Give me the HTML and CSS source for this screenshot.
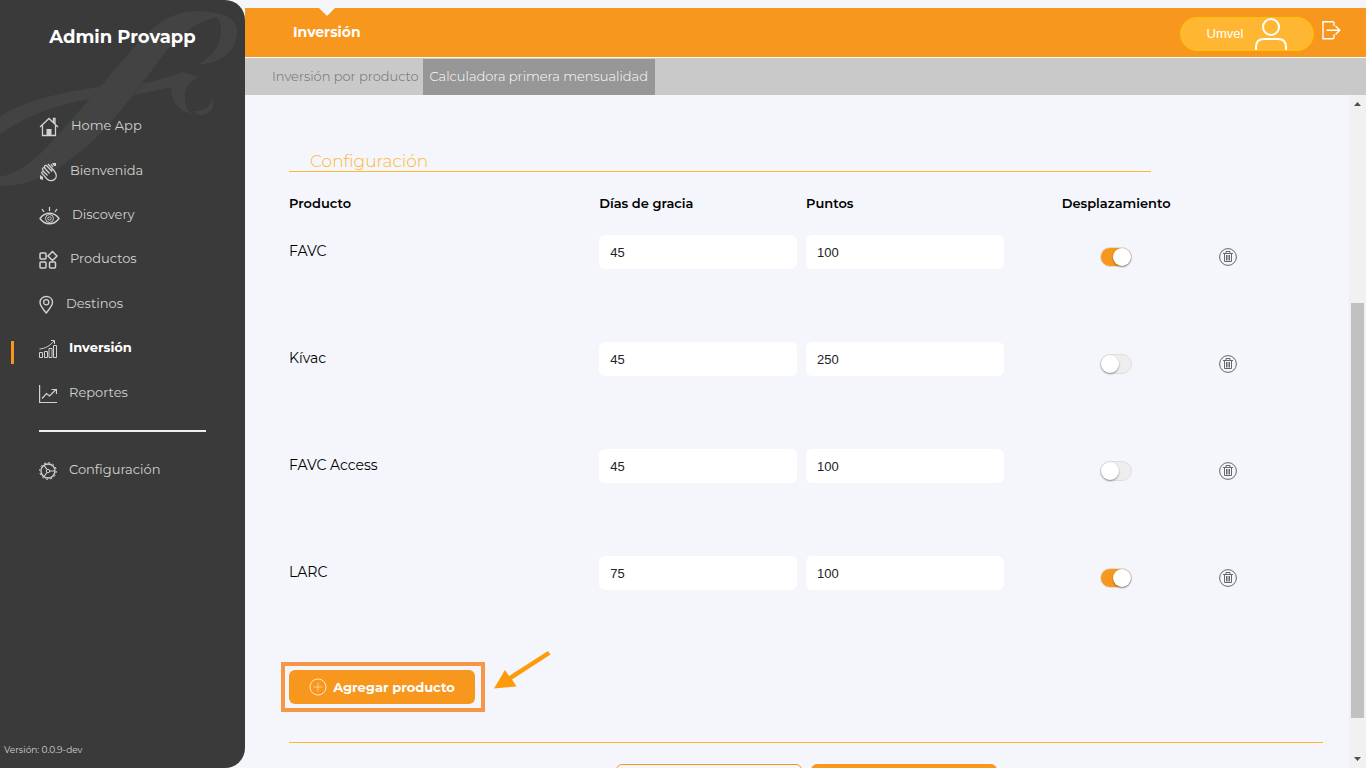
FILE: index.html
```html
<!DOCTYPE html>
<html lang="es">
<head>
<meta charset="utf-8">
<title>Admin Provapp</title>
<link rel="stylesheet" href="styles.css">
</head>
<body>
<div class="app">
  <aside class="sidebar">
    <svg class="swash" viewBox="0 0 750 600" aria-hidden="true">
      <path d="M0 530C60 520 110 475 160 420L300 262C360 190 420 115 475 72C520 38 570 30 612 34C665 40 711 50 711 95C712 150 660 194 595 192C640 170 665 130 663 88C662 68 658 60 652 52C590 62 530 110 480 178L400 285C330 370 290 420 240 455C160 520 90 560 0 557Z"/>
      <path d="M0 348C80 300 190 275 303 260L268 297C170 315 80 345 0 403Z"/>
      <path d="M428 250C470 243 510 228 548 216L598 232C560 245 553 270 555 300C557 325 570 340 582 344C545 337 510 310 514 262C475 270 440 278 402 285Z"/>
      <path d="M578 334C610 335 630 320 640 295C646 330 622 347 602 346C592 345 585 340 578 334Z"/>
    </svg>
    <h1 class="brand">Admin Provapp</h1>
    <nav class="menu">
      <a class="menu-item" href="#"><svg class="icon" width="20" height="20" viewBox="0 0 20 20"><path stroke-width="1.300" d="M1 10L10 1.500L19 10M14.500 5V1.500H16V7M3.500 8.500V18.500H16.500V8.500"/><path class="fill" d="M7.500 12H12.500V18.500H7.500Z"/></svg>Home App</a>
      <a class="menu-item" href="#"><svg class="icon" width="19" height="20" viewBox="0 0 19 20"><path stroke-width="1.200" d="M8 17L3 11.500C2 10 4 9 5 10L3.500 7.500C3 6 5 5 6 6.500L5.500 4.500C5.500 3 7.500 3 8 4L12.500 9C13 7 14 7 14.500 8C17 11 18 13 17 15.500C15 20 10 19 8 17M5 10L8.500 13.500M6 6.500L10.500 11.500M8 4L13 9.500M9 2L13.500 7M12 2L14 5"/><path class="fill" d="M1 13L4 15L4 18L1 17ZM13 1H17V4L15 4Z"/></svg>Bienvenida</a>
      <a class="menu-item" href="#"><svg class="icon" width="21" height="20" viewBox="0 0 21 20"><path stroke-width="1.300" d="M1 12.500C6 5.500 15 5.500 20 12.500C15 19.500 6 19.500 1 12.500ZM10.500 1V5M3 3L5 6M18 3L16 6"/><circle cx="10.500" cy="12.500" r="4"/><circle cx="10.500" cy="12.500" r="1.700"/></svg>Discovery</a>
      <a class="menu-item" href="#"><svg class="icon" width="19" height="20" viewBox="0 0 19 20"><g stroke-width="1.500"><rect x="1" y="3" width="6" height="6" rx="1"/><rect x="1" y="12" width="6" height="6" rx="1"/><rect x="10.500" y="12" width="6" height="6" rx="1"/><path d="M13.500 1.500L18 6L13.500 10.500L9 6Z"/></g></svg>Productos</a>
      <a class="menu-item" href="#"><svg class="icon" width="15" height="20" viewBox="0 0 15 20"><path stroke-width="1.400" d="M7.200 18C3 13 1 10.500 1 7.500C1 -0.500 13.500 -0.500 13.500 7.500C13.500 10.500 11 13 7.200 18Z"/><circle cx="7.200" cy="7.300" r="2.600" stroke-width="1.300"/></svg>Destinos</a>
      <a class="menu-item active" href="#" aria-current="page"><svg class="icon" width="18" height="20" viewBox="0 0 18 20"><path d="M.5 13.500H3.500V18.500H.5ZM5.500 12.500H8.500V18.500H5.500ZM10 9.500H13V18.500H10ZM14.500 6.500H17.500V18.500H14.500ZM.5 10C6 9.500 11 7 15 2M12 1.500H15.500V5"/></svg>Inversión</a>
      <a class="menu-item" href="#"><svg class="icon" width="18" height="20" viewBox="0 0 18 20"><path stroke-width="1.200" d="M.6 1V18.500H18M3 14.500L7.500 9.500L10.500 12L17 5.500M12.500 5.500H17.500V10"/></svg>Reportes</a>
    </nav>
    <hr class="menu-rule">
    <nav class="menu-extra">
      <a class="menu-item" href="#"><svg class="icon" width="18" height="20" viewBox="0 0 18 20"><circle cx="9" cy="10" r="7" stroke-width="1.300"/><circle cx="9" cy="10" r="8.300" stroke-dasharray="2 2.345"/><circle cx="9" cy="10" r="1.700"/><path stroke-width="1.200" d="M10.700 10H16M8 8.500L5 4.500M8 11.500L5 15.500"/></svg>Configuración</a>
    </nav>
    <p class="version">Versión: 0.0.9-dev</p>
  </aside>

  <div class="main">
    <header class="topbar">
      <a class="section" href="#">Inversión</a>
      <button class="user" type="button">Umvel
        <svg width="32" height="32" viewBox="0 0 32 32" fill="none" stroke="#fff" stroke-width="2" aria-hidden="true"><circle cx="16" cy="9" r="8"/><path d="M1 32V29C1 23.500 4 21 9 21H23C28 21 31 23.500 31 29V32"/></svg>
      </button>
      <button class="logout" type="button" aria-label="Salir">
        <svg width="19" height="19" viewBox="0 0 19 19" fill="none" stroke="#fff" stroke-width="1.400"><path d="M12 5V1.500L11 .8H1V17.800H11L12 17V13.500M4.500 9.300H17.500M13.500 5L17.800 9.300L13.500 13.500"/></svg>
      </button>
    </header>
    <nav class="tabs">
      <a class="tab" href="#">Inversión por producto</a>
      <a class="tab selected" href="#">Calculadora primera mensualidad</a>
    </nav>

    <div class="viewport">
      <main class="content">
        <h2 class="heading">Configuración</h2>
        <table class="products">
          <thead>
            <tr><th class="name" scope="col">Producto</th><th scope="col">Días de gracia</th><th scope="col">Puntos</th><th class="center" scope="col">Desplazamiento</th><td class="actions"></td></tr>
          </thead>
          <tbody>
            <tr>
              <td>FAVC</td>
              <td><input class="field" type="text" value="45" aria-label="Días de gracia de FAVC"></td>
              <td><input class="field" type="text" value="100" aria-label="Puntos de FAVC"></td>
              <td class="center"><input class="switch" type="checkbox" checked aria-label="Desplazamiento de FAVC"></td>
              <td><button class="delete" type="button" aria-label="Eliminar FAVC"><svg width="18" height="18" viewBox="0 0 18 18"><use href="#trash"/></svg></button></td>
            </tr>
            <tr>
              <td>Kívac</td>
              <td><input class="field" type="text" value="45" aria-label="Días de gracia de Kívac"></td>
              <td><input class="field" type="text" value="250" aria-label="Puntos de Kívac"></td>
              <td class="center"><input class="switch" type="checkbox" aria-label="Desplazamiento de Kívac"></td>
              <td><button class="delete" type="button" aria-label="Eliminar Kívac"><svg width="18" height="18" viewBox="0 0 18 18"><use href="#trash"/></svg></button></td>
            </tr>
            <tr>
              <td>FAVC Access</td>
              <td><input class="field" type="text" value="45" aria-label="Días de gracia de FAVC Access"></td>
              <td><input class="field" type="text" value="100" aria-label="Puntos de FAVC Access"></td>
              <td class="center"><input class="switch" type="checkbox" aria-label="Desplazamiento de FAVC Access"></td>
              <td><button class="delete" type="button" aria-label="Eliminar FAVC Access"><svg width="18" height="18" viewBox="0 0 18 18"><use href="#trash"/></svg></button></td>
            </tr>
            <tr>
              <td>LARC</td>
              <td><input class="field" type="text" value="75" aria-label="Días de gracia de LARC"></td>
              <td><input class="field" type="text" value="100" aria-label="Puntos de LARC"></td>
              <td class="center"><input class="switch" type="checkbox" checked aria-label="Desplazamiento de LARC"></td>
              <td><button class="delete" type="button" aria-label="Eliminar LARC"><svg width="18" height="18" viewBox="0 0 18 18"><use href="#trash"/></svg></button></td>
            </tr>
          </tbody>
        </table>

        <div class="add-wrap">
          <button class="add" type="button">
            <svg width="18" height="18" viewBox="0 0 18 18" fill="none" stroke="#fff" aria-hidden="true"><circle cx="9" cy="9" r="8" opacity=".75"/><path opacity=".5" d="M9 4.500V13.500M4.500 9H13.500"/></svg>
            Agregar producto
          </button>
          <span class="marker"></span>
          <svg class="arrow" width="58" height="40" viewBox="0 0 58 40" aria-hidden="true"><path d="M55 0L57.500 3.500L19 28.500L23.500 35.500L1 37.500L12 19L16 25Z" fill="#ff9a0a"/></svg>
        </div>
        <hr class="rule">
        <div class="form-actions">
          <button class="secondary" type="button" aria-label="Cancelar"></button>
          <button class="primary" type="button" aria-label="Guardar"></button>
        </div>
      </main>
      <div class="scrollbar" aria-hidden="true">
        <svg width="17" height="17" viewBox="0 0 17 17" fill="#505050"><path d="M5 11L8.500 7L12 11Z"/></svg>
        <div class="track"><div class="thumb"></div></div>
        <svg width="17" height="17" viewBox="0 0 17 17" fill="#505050"><path d="M5 6L8.500 10L12 6Z"/></svg>
      </div>
    </div>
  </div>
</div>
<svg class="defs" aria-hidden="true">
  <symbol id="trash" viewBox="0 0 18 18">
    <circle cx="9" cy="9" r="8.400" fill="none" stroke="#66666c"/>
    <path d="M4 5.500H14M7 5V3.500H11V5M5.500 5.500V13.500H12.500V5.500M7.500 7V12.500M9 7V12.500M10.500 7V12.500" fill="none" stroke="#66666c"/>
  </symbol>
</svg>
</body>
</html>
```
FILE: styles.css
```css
* { box-sizing: border-box; }

body {
  margin: 0;
  background: #f4f6fb;
  color: #000;
  font-family: Montserrat, Inter, "Open Sans", sans-serif;
  font-size: 13px;
}

a { color: inherit; text-decoration: none; }
button { padding: 0; border: 0; background: none; font: inherit; color: inherit; }
svg { display: block; flex: none; }

.app {
  display: grid;
  grid-template-columns: 245px minmax(0, 1fr);
  height: 100vh;
  overflow: hidden;
}

/* Sidebar */
.sidebar {
  position: relative;
  display: flex;
  flex-direction: column;
  background: #3a3a3a;
  color: #d2d2d2;
  border-radius: 0 20px 20px 0;
  overflow: hidden;
}
.swash {
  position: absolute;
  top: 0;
  left: 0;
  width: 250px;
  height: 200px;
  fill: #434343;
}
.brand {
  position: relative;
  margin: 25px 0 53px;
  color: #fff;
  font-size: 18px;
  line-height: 25px;
  font-weight: 700;
  text-align: center;
}
.menu {
  position: relative;
  display: grid;
  grid-auto-rows: 1fr;
  height: 311px;
}
.menu-item {
  display: flex;
  align-items: center;
  gap: 12px;
  padding-left: 39px;
}
.icon {
  margin-top: 4px;
  fill: none;
  stroke: #d2d2d2;
}
.icon .fill { fill: #d2d2d2; stroke: none; }
.active {
  position: relative;
  color: #fff;
  font-weight: 700;
}
.active::before {
  content: "";
  position: absolute;
  left: 11px;
  bottom: 6px;
  width: 3px;
  height: 23px;
  background: #f8971d;
}
.menu-rule {
  width: 167px;
  height: 2px;
  margin: 16px 39px 26px;
  border: 0;
  background: #eee;
}
.menu-extra .menu-item { height: 22px; }
.version {
  margin: auto 0 11px;
  padding-left: 4px;
  font-size: 9px;
  line-height: 14px;
}

/* Header */
.main {
  display: flex;
  flex-direction: column;
  min-width: 0;
  min-height: 0;
  padding-top: 8px;
}
.topbar {
  display: flex;
  align-items: center;
  height: 50px;
  padding: 0 25px 0 48px;
  background: #f8971d;
  border-bottom: 1px solid #fff;
  color: #fff;
}
.section {
  position: relative;
  margin-right: auto;
  font-size: 14px;
  line-height: 49px;
  font-weight: 700;
}
.section::before {
  content: "";
  position: absolute;
  top: 0;
  left: 50%;
  margin-left: -8px;
  border: 8px solid transparent;
  border-top-color: #f4f6fb;
  border-bottom: 0;
}
.user {
  display: flex;
  align-items: center;
  justify-content: center;
  gap: 12px;
  width: 134px;
  height: 34px;
  margin: 2px 8px 0 0;
  border: 1px solid #ffc107;
  border-radius: 17px;
  background: #ffb733;
  font-family: "Liberation Sans", Arial, sans-serif;
}
.logout { margin-bottom: 5px; }

.tabs {
  display: flex;
  height: 37px;
  padding: 1px 23px 0;
  background: #c9c9c9;
}
.tab {
  padding: 0 4px;
  color: #6c6c6c;
  font-weight: 300;
  line-height: 35px;
}
.selected { padding: 0 7px; background: #979797; color: #fff; }

/* Content */
.viewport {
  display: flex;
  flex: 1;
  min-height: 0;
  overflow: hidden;
}
.content {
  flex: 1;
  min-width: 0;
  padding: 57px 26px 0 44px;
}
.heading {
  width: 83.3333%;
  margin: 0;
  padding-left: 21px;
  border-bottom: 1px solid #ffb733;
  color: #ffb733;
  font-size: 17px;
  line-height: 19px;
  font-weight: 300;
}
.products {
  width: 100%;
  border-collapse: collapse;
  table-layout: fixed;
}
.products th, .products td { padding: 0; text-align: left; width: 20%; }
.products .name { width: 30%; }
.products .actions { width: 10%; }
.products .center { text-align: center; }
.products th { height: 63px; padding-bottom: 2px; font-weight: 600; }
.products tbody td {
  height: 107px;
  vertical-align: top;
  font-size: 14px;
  line-height: 33px;
}
.field {
  display: block;
  width: calc(100% - 9px);
  height: 34px;
  padding: 0 11px;
  border: 0;
  border-radius: 6px;
  background: #fff;
  color: #222;
  font: 13px "Liberation Sans", Arial, sans-serif;
}
.switch {
  appearance: none;
  display: inline-block;
  width: 32px;
  height: 20px;
  margin: 12px 0 0;
  border: 1px solid #dedede;
  border-radius: 10px;
  background: #eee;
  vertical-align: top;
}
.switch::before {
  content: "";
  display: block;
  width: 18px;
  height: 18px;
  border-radius: 50%;
  background: #fff;
  box-shadow: 0 1px 2px rgba(0, 0, 0, .4);
}
.switch:checked { background: #f8971d; }
.switch:checked::before { margin-left: auto; }
.delete { display: block; margin: 13px 0 0 -1px; }
.defs { position: absolute; width: 0; height: 0; }

.add-wrap {
  position: relative;
  width: 186px;
  margin-top: 7px;
}
.add {
  display: flex;
  align-items: center;
  justify-content: center;
  gap: 6px;
  width: 100%;
  height: 34px;
  border-radius: 6px;
  background: #f8971d;
  color: #fff;
  font-weight: 700;
}
.marker {
  position: absolute;
  inset: -8px -10px -8px -8px;
  border: 4px solid #f79646;
  pointer-events: none;
}
.arrow {
  position: absolute;
  left: 204px;
  top: -19px;
}
.rule {
  height: 1px;
  margin: 38px 0 21px;
  border: 0;
  background: #ffb733;
}
.form-actions {
  display: flex;
  justify-content: center;
  gap: 9px;
}
.primary, .secondary {
  width: 186px;
  height: 34px;
  border: 1px solid #f8971d;
  border-radius: 6px;
}
.primary { background: #f8971d; }

.scrollbar {
  display: flex;
  flex-direction: column;
  width: 17px;
  background: #f1f1f1;
}
.track {
  display: flex;
  flex-direction: column;
  flex: 1;
  padding: 0 2px;
}
.thumb {
  height: 65%;
  margin: auto 0 33px;
  background: #c1c1c1;
}
```
